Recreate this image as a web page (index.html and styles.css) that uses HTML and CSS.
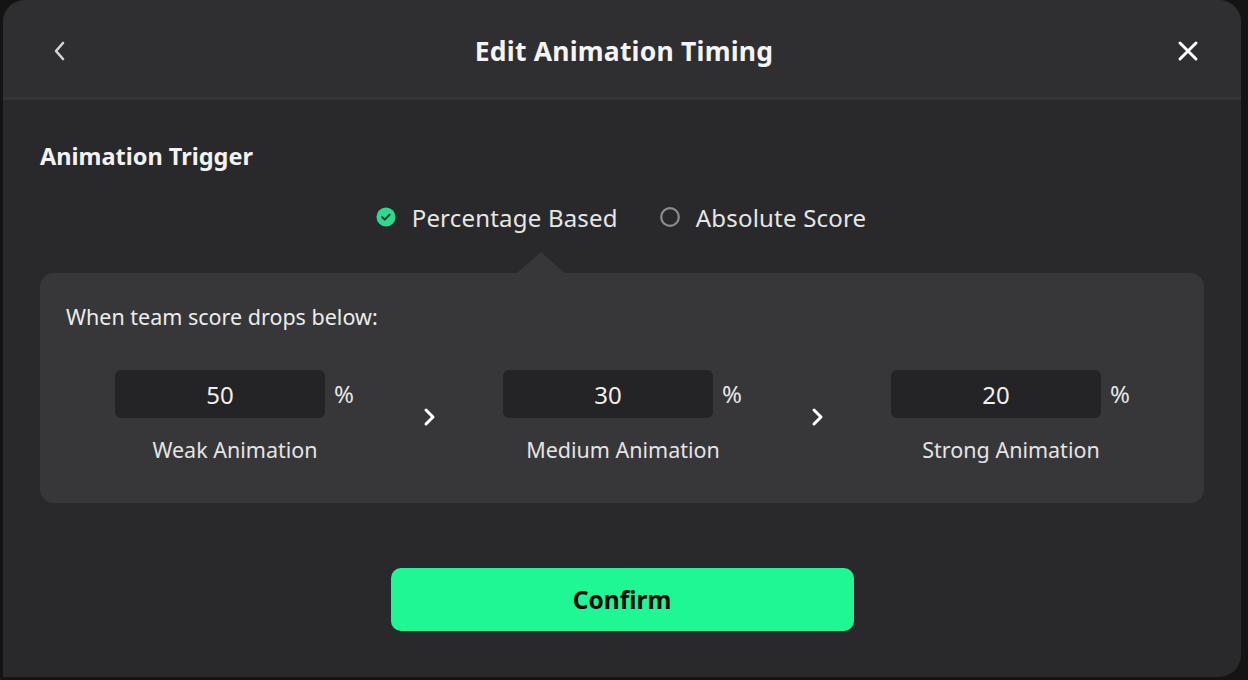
FILE: index.html
```html
<!DOCTYPE html>
<html lang="en">

<head>
    <meta charset="UTF-8">
    <meta name="viewport" content="width=device-width, initial-scale=1.0">
    <title>Edit Animation Timing</title>
    <link rel="stylesheet" href="styles.css">
</head>

<body>
    <!-- dialog -->
    <div class="dialog">
        <!-- header -->
        <div class="header">
            <div class="backBtn">
                <svg width="14" height="20" viewBox="0 0 14 20">
                    <path d="M10 2 L3 10 L10 18" fill="none" stroke="#d4d4d4" stroke-width="2.6" stroke-linecap="round" stroke-linejoin="round" />
                </svg>
            </div>
            <div class="title">Edit Animation Timing</div>
            <div class="closeBtn">
                <svg width="22" height="22" viewBox="0 0 22 22">
                    <path d="M3 3 L19 19 M19 3 L3 19" fill="none" stroke="#ffffff" stroke-width="3" stroke-linecap="round" />
                </svg>
            </div>
        </div>

        <!-- body -->
        <div class="content">
            <div class="sectionTitle">Animation Trigger</div>

            <div class="radioRow">
                <div class="radioItem">
                    <svg class="radioIcon" width="20" height="20" viewBox="0 0 20 20">
                        <circle cx="10" cy="10" r="9.5" fill="#2ed88c" />
                        <path d="M6.2 10.2 L8.8 12.6 L13.6 7.6" fill="none" stroke="#1b3a2b" stroke-width="2" stroke-linecap="round" stroke-linejoin="round" />
                    </svg>
                    <span>Percentage Based</span>
                </div>
                <div class="radioItem">
                    <svg class="radioIcon" width="20" height="20" viewBox="0 0 20 20">
                        <circle cx="10" cy="10" r="8.8" fill="none" stroke="#8c8c8e" stroke-width="2.2" />
                    </svg>
                    <span>Absolute Score</span>
                </div>
            </div>

            <!-- panel -->
            <div class="panel">
                <div class="panelArrow"></div>
                <div class="panelLabel">When team score drops below:</div>
                <div class="levels">
                    <div class="level">
                        <div class="inputRow">
                            <div class="valueBox">50</div>
                            <span class="unit">%</span>
                        </div>
                        <div class="levelName">Weak Animation</div>
                    </div>
                    <svg class="chevron" width="14" height="22" viewBox="0 0 14 22">
                        <path d="M4 4 L11 11 L4 18" fill="none" stroke="#ffffff" stroke-width="3" stroke-linecap="round" stroke-linejoin="round" />
                    </svg>
                    <div class="level">
                        <div class="inputRow">
                            <div class="valueBox">30</div>
                            <span class="unit">%</span>
                        </div>
                        <div class="levelName">Medium Animation</div>
                    </div>
                    <svg class="chevron" width="14" height="22" viewBox="0 0 14 22">
                        <path d="M4 4 L11 11 L4 18" fill="none" stroke="#ffffff" stroke-width="3" stroke-linecap="round" stroke-linejoin="round" />
                    </svg>
                    <div class="level">
                        <div class="inputRow">
                            <div class="valueBox">20</div>
                            <span class="unit">%</span>
                        </div>
                        <div class="levelName">Strong Animation</div>
                    </div>
                </div>
            </div>

            <div class="confirmBtn">Confirm</div>
        </div>
    </div>
</body>

</html>
```
FILE: styles.css
```css
* {
    margin: 0;
    padding: 0;
    box-sizing: border-box;
}

body {
    background: #141415;
    font-family: "Noto Sans", "Open Sans", sans-serif;
    color: #ececec;
    width: 1248px;
    height: 680px;
    overflow: hidden;
}

.dialog {
    width: 1238px;
    height: 677px;
    margin-left: 3px;
    background: #29292b;
    border-radius: 22px 22px 22px 0;
    overflow: hidden;
    display: flex;
    flex-direction: column;
}

.header {
    height: 100px;
    flex-shrink: 0;
    display: flex;
    align-items: center;
    justify-content: space-between;
    padding: 4px 41px 0 45px;
    background: #2f2f31;
    border-bottom: 3px solid #353537;
}

.backBtn,
.closeBtn {
    width: 24px;
    display: flex;
    justify-content: center;
}

.title {
    font-size: 26.5px;
    font-weight: 700;
    color: #f4f4f4;
    letter-spacing: 0.2px;
}

.content {
    padding: 0 37px;
    display: flex;
    flex-direction: column;
}

.sectionTitle {
    margin-top: 41px;
    font-size: 23.5px;
    font-weight: 700;
    line-height: 30px;
    color: #f2f2f2;
}

.radioRow {
    margin-top: 30px;
    display: flex;
    justify-content: center;
    gap: 42px;
    padding-right: 2px;
}

.radioItem {
    display: flex;
    align-items: center;
    gap: 16px;
    font-size: 24px;
    letter-spacing: 0.2px;
    line-height: 34px;
    color: #e6e6e6;
}

.radioIcon {
    margin-top: -2px;
}

.panel {
    position: relative;
    margin-top: 38px;
    height: 230px;
    background: #37373a;
    border-radius: 14px;
    padding: 0 26px;
}

.panelArrow {
    position: absolute;
    left: 476px;
    top: -21px;
    width: 0;
    height: 0;
    border-left: 25px solid transparent;
    border-right: 25px solid transparent;
    border-bottom: 22px solid #37373a;
}

.panelLabel {
    padding-top: 30px;
    font-size: 21.5px;
    line-height: 28px;
    color: #ececec;
}

.levels {
    margin-top: 39px;
    display: flex;
    justify-content: center;
    align-items: center;
    gap: 67px;
    padding-left: 2px;
}

.level {
    width: 240px;
    display: flex;
    flex-direction: column;
    align-items: center;
}

.inputRow {
    display: flex;
    align-items: center;
    gap: 9px;
}

.valueBox {
    width: 210px;
    height: 48px;
    background: #242426;
    border-radius: 6px;
    display: flex;
    align-items: center;
    justify-content: center;
    font-size: 24px;
    color: #f0f0f0;
}

.unit {
    width: 21px;
    font-size: 24px;
    color: #e8e8e8;
    margin-top: -2px;
}

.levelName {
    margin-top: 18px;
    font-size: 21.5px;
    line-height: 28px;
    color: #e4e4e4;
}

.chevron {
    flex-shrink: 0;
}

.confirmBtn {
    margin: 65px auto 0;
    width: 463px;
    height: 63px;
    background: #1ff794;
    border-radius: 10px;
    display: flex;
    align-items: center;
    justify-content: center;
    font-size: 24.5px;
    font-weight: 700;
    color: #0b0b0b;
}
```
